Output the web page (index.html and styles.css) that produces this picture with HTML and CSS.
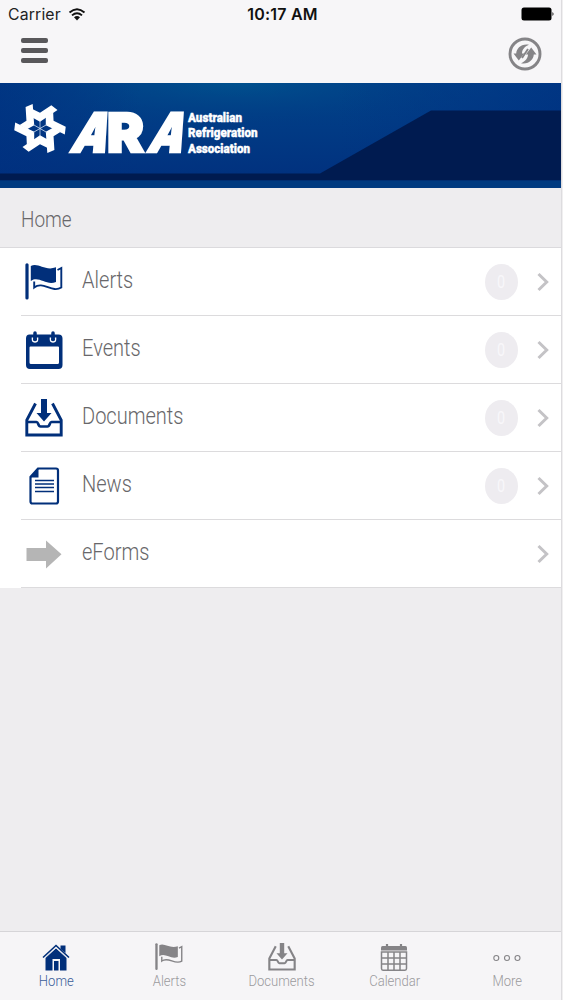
FILE: index.html
```html
<!DOCTYPE html>
<html lang="en">
<head>
<meta charset="utf-8">
<title>ARA</title>
<link rel="stylesheet" href="styles.css">
</head>
<body>
<svg class="defs" width="0" height="0">
  <symbol id="flag" viewBox="0 0 38 38">
    <path d="M2 1.800V35" fill="none" stroke="currentColor" stroke-width="3.200" stroke-linecap="round"/>
    <path d="M5.800 3C13-1 20 8.500 31 4.300V19C21 23 14 12.500 5.800 18Z" fill="currentColor"/>
    <path d="M32.500 7L36.300 5V24.500C27 30.500 18 17.500 9.200 24.500V18.500" fill="none" stroke="currentColor" stroke-width="1.900"/>
  </symbol>
  <symbol id="inbox" viewBox="0 0 38 38">
    <path d="M10.500 4.500L1.800 21V36H36.200V21L27.500 4.500" fill="none" stroke="currentColor" stroke-width="2.900"/>
    <path d="M2 23H11.500C13.500 23 13 27.500 15.500 27.500H22.500C25 27.500 24.500 23 26.500 23H36" fill="none" stroke="currentColor" stroke-width="2.700"/>
    <path d="M16 0H22V14H26.500L19 22.500L11.500 14H16Z" fill="currentColor"/>
  </symbol>
</svg>
<div class="screen">
  <header>
    <div class="status">
      <div class="carrier"><span>Carrier</span>
        <svg width="18" height="13" viewBox="0 0 18 13"><path d="M1.500 4.500Q9-2 16.500 4.500M4 7.400Q9 3 14 7.400" fill="none" stroke="#111" stroke-width="1.900"/><path d="M6 9.300Q9 6.800 12 9.300L9 12.400Z" fill="#111"/></svg>
      </div>
      <time>10:17 AM</time>
      <svg class="battery" width="34" height="14" viewBox="0 0 34 14"><rect x=".5" y=".5" width="30" height="13" rx="2.500" fill="#000"/><path d="M31.500 5Q33.500 7 31.500 9Z"/></svg>
    </div>
    <div class="tools">
      <div class="menu"><i></i><i></i><i></i></div>
      <svg class="sync" width="34" height="34" viewBox="-17 -17 34 34">
        <circle r="15" fill="none" stroke="#858487" stroke-width="2.900"/>
        <g id="arr" fill="#858487"><path d="M4-9.200C-4-10.500-8.500-5.500-8.800-.5H-11.500L-6.200 6.500L-.8-.5H-3C-3-4-.5-7.500 4-9.200Z"/></g>
        <use href="#arr" transform="rotate(180)"/>
        <path d="M3-5L-3 4" stroke="#858487" stroke-width="1.900"/>
      </svg>
    </div>
  </header>
  <svg class="banner" width="561" height="105" viewBox="0 0 561 105">
    <defs>
      <linearGradient id="base" x2="0" y2="1"><stop stop-color="#01438a"/><stop offset="1" stop-color="#012f7d"/></linearGradient>
      <radialGradient id="glow" cx=".42" cy="0" r=".45"><stop stop-color="#00568f" stop-opacity=".7"/><stop offset="1" stop-color="#003880" stop-opacity="0"/></radialGradient>
      <linearGradient id="edge"><stop stop-color="#003080" stop-opacity=".7"/><stop offset=".25" stop-color="#003080" stop-opacity="0"/><stop offset=".6" stop-color="#003080" stop-opacity="0"/><stop offset="1" stop-color="#003080" stop-opacity=".7"/></linearGradient>
    </defs>
    <rect width="562" height="105" fill="url(#base)"/>
    <rect width="562" height="105" fill="url(#glow)"/>
    <rect width="562" height="105" fill="url(#edge)"/>
    <path d="M0 90.500H320L431 27.500H562V97.500H0Z" fill="#001b50"/>
    <rect y="97.500" width="562" height="7.500" fill="#003a80"/>
    <g transform="translate(40 45.500) scale(1.030)" fill="#fff">
      <g id="arm"><path d="M-7-18.800L0-15.200L11-22.500L17-18L0-6.500L-7-10.500Z"/><path d="M0-8V0" stroke="#d4e2f2" stroke-width=".7"/></g>
      <use href="#arm" transform="rotate(60)"/><use href="#arm" transform="rotate(120)"/><use href="#arm" transform="rotate(180)"/><use href="#arm" transform="rotate(240)"/><use href="#arm" transform="rotate(300)"/>
    </g>
    <g class="mark">
      <text transform="translate(69 69) skewX(-19)" textLength="36" lengthAdjust="spacingAndGlyphs">A</text>
      <text x="107" y="69" textLength="37" lengthAdjust="spacingAndGlyphs">R</text>
      <text transform="translate(146 69) skewX(-19)" textLength="35" lengthAdjust="spacingAndGlyphs">A</text>
    </g>
    <g class="name">
      <text x="188" y="39" textLength="54" lengthAdjust="spacingAndGlyphs">Australian</text>
      <text x="188" y="54.200" textLength="69.500" lengthAdjust="spacingAndGlyphs">Refrigeration</text>
      <text x="188" y="69.500" textLength="62" lengthAdjust="spacingAndGlyphs">Association</text>
    </g>
  </svg>
  <div class="title"><span class="cond">Home</span></div>
  <main>
    <div class="row"><svg class="ico" viewBox="0 0 38 38"><use href="#flag"/></svg><span class="cond">Alerts</span><b><span>0</span></b><svg class="chev" viewBox="0 0 12 20"><path d="M1.500 2L9.700 10L1.500 18"/></svg></div>
    <div class="row"><svg class="ico" viewBox="0 0 38 38"><path fill-rule="evenodd" d="M4.500 3.500H33.500Q37.500 3.500 37.500 7.500V34Q37.500 38 33.500 38H5Q1 38 1 34V7.500Q1 3.500 4.500 3.500ZM5.500 15.500Q4.500 15.500 4.500 16.500V31.500Q4.500 33 6 33H32.500Q34 33 34 31.500V16.500Q34 15.500 33 15.500Z" fill="currentColor"/><path d="M10 2V8M28 2V8" stroke="currentColor" stroke-width="3.500" stroke-linecap="round"/><path d="M7.500 6.500Q6.500 11 10 11T12.500 6.500M25.500 6.500Q24.500 11 28 11T30.500 6.500" fill="none" stroke="#fff" stroke-width="1.400"/></svg><span class="cond">Events</span><b><span>0</span></b><svg class="chev" viewBox="0 0 12 20"><path d="M1.500 2L9.700 10L1.500 18"/></svg></div>
    <div class="row"><svg class="ico" viewBox="0 0 38 38"><use href="#inbox"/></svg><span class="cond">Documents</span><b><span>0</span></b><svg class="chev" viewBox="0 0 12 20"><path d="M1.500 2L9.700 10L1.500 18"/></svg></div>
    <div class="row"><svg class="ico" viewBox="0 0 38 38"><path d="M13 1.500H31Q33 1.500 33 3.500V34.500Q33 36.500 31 36.500H7.500Q5.500 36.500 5.500 34.500V10Z" fill="none" stroke="currentColor" stroke-width="2.200"/><path d="M5 10.500L13.500 1.500V10.500Z" fill="currentColor"/><path d="M10 13.500H29M10 17H29M10 20.500H29M10 24.500H29" stroke="currentColor" stroke-width="1.300"/></svg><span class="cond">News</span><b><span>0</span></b><svg class="chev" viewBox="0 0 12 20"><path d="M1.500 2L9.700 10L1.500 18"/></svg></div>
    <div class="row"><svg class="ico" viewBox="0 0 38 38"><path d="M1.500 13H21V5.500L36.500 19.300L21 33.500V26H1.500Z" fill="#b5b5b5"/></svg><span class="cond">eForms</span><svg class="chev" viewBox="0 0 12 20"><path d="M1.500 2L9.700 10L1.500 18"/></svg></div>
  </main>
  <nav>
    <div class="tab on"><svg viewBox="0 0 28 28"><path d="M3.500 14.500L14 5L24.500 14.500V27.500H18V16H10.500V27.500H3.500Z" fill="currentColor"/><path d="M1 14.500L14 2.500L27 14.500" fill="none" stroke="currentColor" stroke-width="1.600"/><path d="M2.500 15.500L14 5L25.500 15.500" fill="none" stroke="#f6f5f7" stroke-width=".8"/><path d="M12 18H16.500V27.500H12ZM18.500 2.500H23.500V10L18.500 6Z" fill="currentColor"/></svg><span class="cond">Home</span></div>
    <div class="tab"><svg viewBox="0 0 38 38"><use href="#flag"/></svg><span class="cond">Alerts</span></div>
    <div class="tab"><svg viewBox="0 0 38 38"><use href="#inbox"/></svg><span class="cond">Documents</span></div>
    <div class="tab"><svg viewBox="0 0 28 28"><path d="M1 4.500Q1 3 2.500 3H25.500Q27 3 27 4.500V7.500H1Z" fill="currentColor"/><path d="M7 1V4M21 1V4" stroke="currentColor" stroke-width="2.200"/><path d="M1.500 9H26.500V25.500Q26.500 27.200 25 27.200H3Q1.500 27.200 1.500 25.500ZM1.500 15H26.500M1.500 21H26.500M8 9V27M14 9V27M20 9V27" fill="none" stroke="currentColor" stroke-width="1.500"/></svg><span class="cond">Calendar</span></div>
    <div class="tab"><svg viewBox="0 0 28 28"><g fill="none" stroke="currentColor" stroke-width="1.100"><circle cx="3.300" cy="15" r="2.500"/><circle cx="14" cy="15" r="2.500"/><circle cx="24.500" cy="15" r="2.500"/></g></svg><span class="cond">More</span></div>
  </nav>
</div>
</body>
</html>
```
FILE: styles.css
```css
* { box-sizing: border-box; }
body { margin: 0; background: #f0eff0; overflow: hidden; }
.defs { display: block; height: 0; }
.screen { width: 562px; height: 1000px; display: flex; flex-direction: column; background: #eeedef; border-right: 1px solid #dddcdf; font-family: Roboto, sans-serif; }
header { height: 83px; background: #f7f6f8; }
.status { height: 28px; padding: 0 6px 0 8px; display: grid; grid-template-columns: 1fr auto 1fr; align-items: center; font-family: Inter, sans-serif; font-size: 15.800px; color: #222; }
.carrier { display: flex; align-items: center; gap: 7px; letter-spacing: .15px; }
.status time { font-weight: 600; color: #111; font-size: 16px; letter-spacing: .2px; padding-left: 2px; }
.battery { justify-self: end; }
.tools { display: flex; justify-content: space-between; padding: 8.500px 19px 0 20.500px; }
.menu { width: 27px; display: flex; flex-direction: column; gap: 5px; padding-top: 1px; }
.menu i { height: 5px; border-radius: 2px; background: #59585b; }
.banner { display: block; flex: none; }
.mark { font: 900 54px Inter, sans-serif; fill: #fff; stroke: #fff; stroke-width: 2.400px; }
.name { font: 900 13.400px Roboto, sans-serif; fill: #fff; stroke: #fff; stroke-width: .4px; }
.cond { display: inline-block; font-weight: 300; transform: scaleX(.86); transform-origin: 0 50%; white-space: nowrap; }
.title { height: 60px; padding: 3px 21px 0; display: flex; align-items: center; font-size: 22px; color: #68676a; }
main { background: #fff; border-top: 1px solid #dbdadd; padding-left: 21px; margin-top: -1px; }
.row { height: 68px; display: flex; align-items: center; border-bottom: 1.500px solid #dcdbdd; padding-right: 12px; color: #012f7a; }
.ico { width: 38px; height: 38px; margin-left: 4px; }
.row .cond { margin: -3px auto 0 19px; font-size: 23.300px; color: #68676a; }
.row b { width: 33px; height: 36px; border-radius: 50%; background: #eeecf0; display: flex; align-items: center; justify-content: center; color: #f8f7fa; font-size: 18px; font-weight: 400; margin-right: 19px; }
.row b span { transform: scaleX(.8); }
.chev { width: 12px; height: 20px; fill: none; stroke: #c4c3c6; stroke-width: 3px; }
nav { margin-top: auto; width: 100%; height: 69px; border-top: 1px solid #d6d5d8; background: #f6f5f7; display: grid; grid-template-columns: repeat(5, 112.700px); }
.tab { display: flex; flex-direction: column; align-items: center; padding-top: 11px; color: #858487; }
.tab svg { width: 28px; height: 28px; }
.tab .cond { font-size: 15.200px; line-height: 20px; color: #9b9a9d; transform-origin: 50% 50%; }
.tab.on { color: #012f7a; }
.tab.on .cond { color: #3b5d99; }
```
